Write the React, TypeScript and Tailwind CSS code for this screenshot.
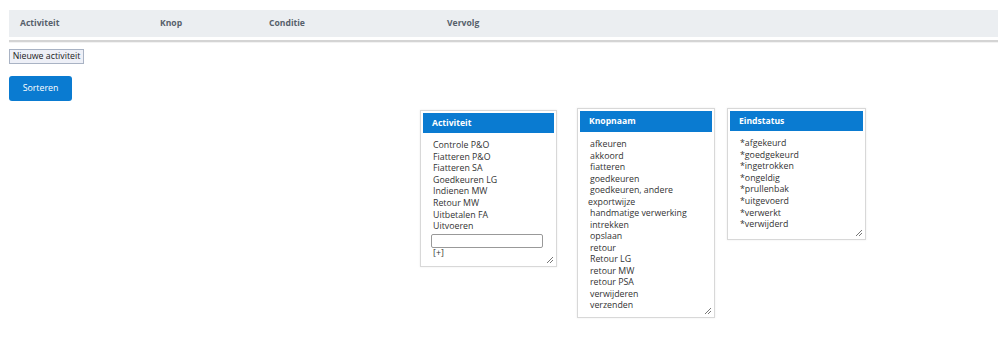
import React from "react";

const Grip = () => (
  <svg className="absolute right-[2px] bottom-[2px]" width="8" height="8" viewBox="0 0 8 8">
    <path d="M7 1 L1 7 M7 4 L4 7" stroke="#777" strokeWidth="1" />
  </svg>
);

const activiteiten = ["Controle P&O", "Fiatteren P&O", "Fiatteren SA", "Goedkeuren LG", "Indienen MW", "Retour MW", "Uitbetalen FA", "Uitvoeren"];
const knoppen = ["afkeuren", "akkoord", "fiatteren", "goedkeuren", "goedkeuren, andere", "exportwijze", "handmatige verwerking", "intrekken", "opslaan", "retour", "Retour LG", "retour MW", "retour PSA", "verwijderen", "verzenden"];
const statussen = ["*afgekeurd", "*goedgekeurd", "*ingetrokken", "*ongeldig", "*prullenbak", "*uitgevoerd", "*verwerkt", "*verwijderd"];

export default function App() {
  return (
    <div className="w-[998px] h-[348px] bg-white text-[#333] overflow-hidden" style={{ fontFamily: '"Open Sans", sans-serif' }}>
      <div className="pl-[9px] pt-[10px] flex flex-col items-start">
        <div className="w-full h-[27px] bg-[#ebeef1] flex items-center text-[8.6px] font-bold text-[#56606b]">
          <span className="ml-[11px] w-[140px]">Activiteit</span>
          <span className="w-[109px]">Knop</span>
          <span className="w-[178px]">Conditie</span>
          <span>Vervolg</span>
        </div>
        <div className="w-full mt-[3px] h-[2px] bg-[#d4d4d4]"></div>
        <div className="w-full h-[1px] bg-[#f2f2f2]"></div>
        <button className="mt-[6px] h-[15px] w-[75px] flex items-center justify-center border border-[#a9b3c4] bg-[#eef0f7] text-[8.8px] leading-none text-[#222]">Nieuwe activiteit</button>
        <button className="mt-[12px] w-[63px] h-[25px] rounded-[3px] bg-[#0a7bd1] text-white text-[8.8px] flex items-center justify-center">Sorteren</button>
      </div>
      <div className="flex items-start">
        <div className="relative ml-[420px] mt-[9px] w-[137px] h-[157px] border border-[#d8d8d8] p-[2px] shadow-[0_0_2px_rgba(0,0,0,0.08)]">
          <div className="h-[20px] bg-[#0a7bd1] text-white text-[8.6px] font-bold flex items-center pl-[9px]">Activiteit</div>
          <div className="pl-[10px] pt-[7px] text-[8.8px] leading-[11.6px]">
            {activiteiten.map((a) => (
              <div key={a}>{a}</div>
            ))}
            <div className="mt-[1px] w-[112px] h-[14px] border border-[#999] rounded-[2px] -ml-[2px]"></div>
            <div className="mt-[0px]">[+]</div>
          </div>
          <Grip />
        </div>
        <div className="relative ml-[20px] mt-[7px] w-[138px] h-[210px] border border-[#d8d8d8] p-[2px] shadow-[0_0_2px_rgba(0,0,0,0.08)]">
          <div className="h-[21px] bg-[#0a7bd1] text-white text-[8.6px] font-bold flex items-center pl-[9px]">Knopnaam</div>
          <div className="pl-[10px] pt-[7px] text-[8.8px] leading-[11.5px]">
            {knoppen.map((a) => (
              <div key={a} className={a === "exportwijze" ? "-ml-[2px]" : ""}>{a}</div>
            ))}
          </div>
          <Grip />
        </div>
        <div className="relative ml-[12px] mt-[7px] w-[139px] h-[132px] border border-[#d8d8d8] p-[2px] shadow-[0_0_2px_rgba(0,0,0,0.08)]">
          <div className="h-[20px] bg-[#0a7bd1] text-white text-[8.6px] font-bold flex items-center pl-[9px]">Eindstatus</div>
          <div className="pl-[10px] pt-[7px] text-[8.8px] leading-[11.6px]">
            {statussen.map((a) => (
              <div key={a}>{a}</div>
            ))}
          </div>
          <Grip />
        </div>
      </div>
    </div>
  );
}
